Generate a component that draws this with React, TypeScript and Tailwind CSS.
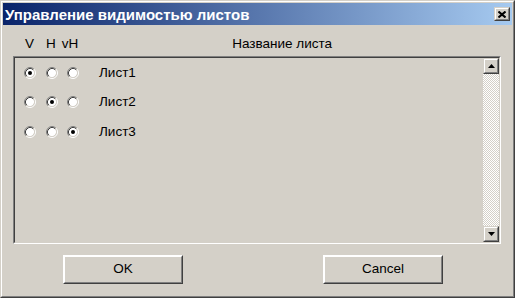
import { type ReactNode } from 'react'

const FONT = "font-['Liberation_Sans',Arial,sans-serif]"

const RAISED_OUTER = 'border border-t-[#d4d0c8] border-l-[#d4d0c8] border-r-[#404040] border-b-[#404040]'
const RAISED_INNER = 'border border-t-white border-l-white border-r-[#808080] border-b-[#808080]'

const SHEETS = [
  { name: 'Лист1', mode: 0 },
  { name: 'Лист2', mode: 1 },
  { name: 'Лист3', mode: 2 },
]

function Radio(props: { checked: boolean; className?: string }) {
  return (
    <svg width="12" height="12" viewBox="0 0 12 12" className={props.className}>
      <circle cx="6" cy="6" r="4.2" fill="#fff" />
      <path d="M2.11 9.89 A5.5 5.5 0 0 1 9.89 2.11" fill="none" stroke="#808080" strokeWidth="1" />
      <path d="M9.89 2.11 A5.5 5.5 0 0 1 2.11 9.89" fill="none" stroke="#fff" strokeWidth="1" />
      <path d="M2.82 9.18 A4.5 4.5 0 0 1 9.18 2.82" fill="none" stroke="#404040" strokeWidth="1" />
      <path d="M9.18 2.82 A4.5 4.5 0 0 1 2.82 9.18" fill="none" stroke="#d4d0c8" strokeWidth="1" />
      {props.checked ? <circle cx="6" cy="6" r="2" fill="#000" /> : null}
    </svg>
  )
}

function Raised(props: { className?: string; children?: ReactNode }) {
  return (
    <div className={`${RAISED_OUTER} bg-[#d4d0c8] ${props.className ?? ''}`}>
      <div className={`${RAISED_INNER} flex h-full w-full items-center justify-center`}>
        {props.children}
      </div>
    </div>
  )
}

function Arrow(props: { up?: boolean }) {
  return (
    <svg width="7" height="4" viewBox="0 0 7 4">
      <path d={props.up ? 'M3.5 0 L7 4 L0 4 Z' : 'M0 0 L7 0 L3.5 4 Z'} fill="#000" />
    </svg>
  )
}

export default function App() {
  return (
    <div className={`${FONT} w-[515px] h-[298px] border border-t-[#d4d0c8] border-l-[#d4d0c8] border-r-[#404040] border-b-[#404040]`}>
      <div className="flex h-full flex-col border border-t-white border-l-white border-r-[#808080] border-b-[#808080] bg-[#d4d0c8] p-px">
        {/* title bar */}
        <div className="flex h-[22px] items-center justify-between bg-[linear-gradient(to_right,#0a246a,#a6caf0)] pl-[2px] pr-[2px]">
          <span className="text-[15px] font-bold leading-none text-white">Управление видимостью листов</span>
          <Raised className="h-[14px] w-[16px]">
            <svg width="8" height="7" viewBox="0 0 8 7">
              <path d="M0.5 0.5 L7.5 6.5 M7.5 0.5 L0.5 6.5" stroke="#000" strokeWidth="2" />
            </svg>
          </Raised>
        </div>

        {/* column headers */}
        <div className="mt-[12px] flex h-[14px] items-center text-[13.5px] leading-none text-black">
          <span className="ml-[22px]">V</span>
          <span className="ml-[12px]">H</span>
          <span className="ml-[6px]">vH</span>
          <span className="ml-[154px]">Название листа</span>
        </div>

        {/* list box */}
        <div className="ml-[10px] mt-[5px] h-[188px] w-[488px] border border-t-[#808080] border-l-[#808080] border-r-white border-b-white">
          <div className="flex h-full border border-t-[#404040] border-l-[#404040] border-r-[#d4d0c8] border-b-[#d4d0c8]">
            <div className="flex-1">
              {SHEETS.map((s) => (
                <div key={s.name} className="flex h-[29.5px] items-center pl-[9px]">
                  <Radio checked={s.mode === 0} />
                  <Radio checked={s.mode === 1} className="ml-[10px]" />
                  <Radio checked={s.mode === 2} className="ml-[9px]" />
                  <span className="ml-[20px] text-[13.5px] text-black">{s.name}</span>
                </div>
              ))}
            </div>
            <div className="flex w-[16px] flex-col">
              <Raised className="h-[16px] w-[16px]">
                <Arrow up />
              </Raised>
              <div className="flex-1 bg-[repeating-conic-gradient(#d4d0c8_0_25%,#ffffff_0_50%)] bg-[length:2px_2px]" />
              <Raised className="h-[16px] w-[16px]">
                <Arrow />
              </Raised>
            </div>
          </div>
        </div>

        {/* buttons */}
        <div className="mt-[11px] flex">
          <button type="button" className="ml-[60px] h-[29px] w-[120px] border border-t-white border-l-white border-r-[#404040] border-b-[#404040]">
            <div className="flex h-full w-full items-center justify-center border border-t-white border-l-white border-r-[#808080] border-b-[#808080] text-[13.5px] text-black">
              OK
            </div>
          </button>
          <button type="button" className="ml-[140px] h-[29px] w-[120px] border border-t-white border-l-white border-r-[#404040] border-b-[#404040]">
            <div className="flex h-full w-full items-center justify-center border border-t-white border-l-white border-r-[#808080] border-b-[#808080] text-[13.5px] text-black">
              Cancel
            </div>
          </button>
        </div>
      </div>
    </div>
  )
}
